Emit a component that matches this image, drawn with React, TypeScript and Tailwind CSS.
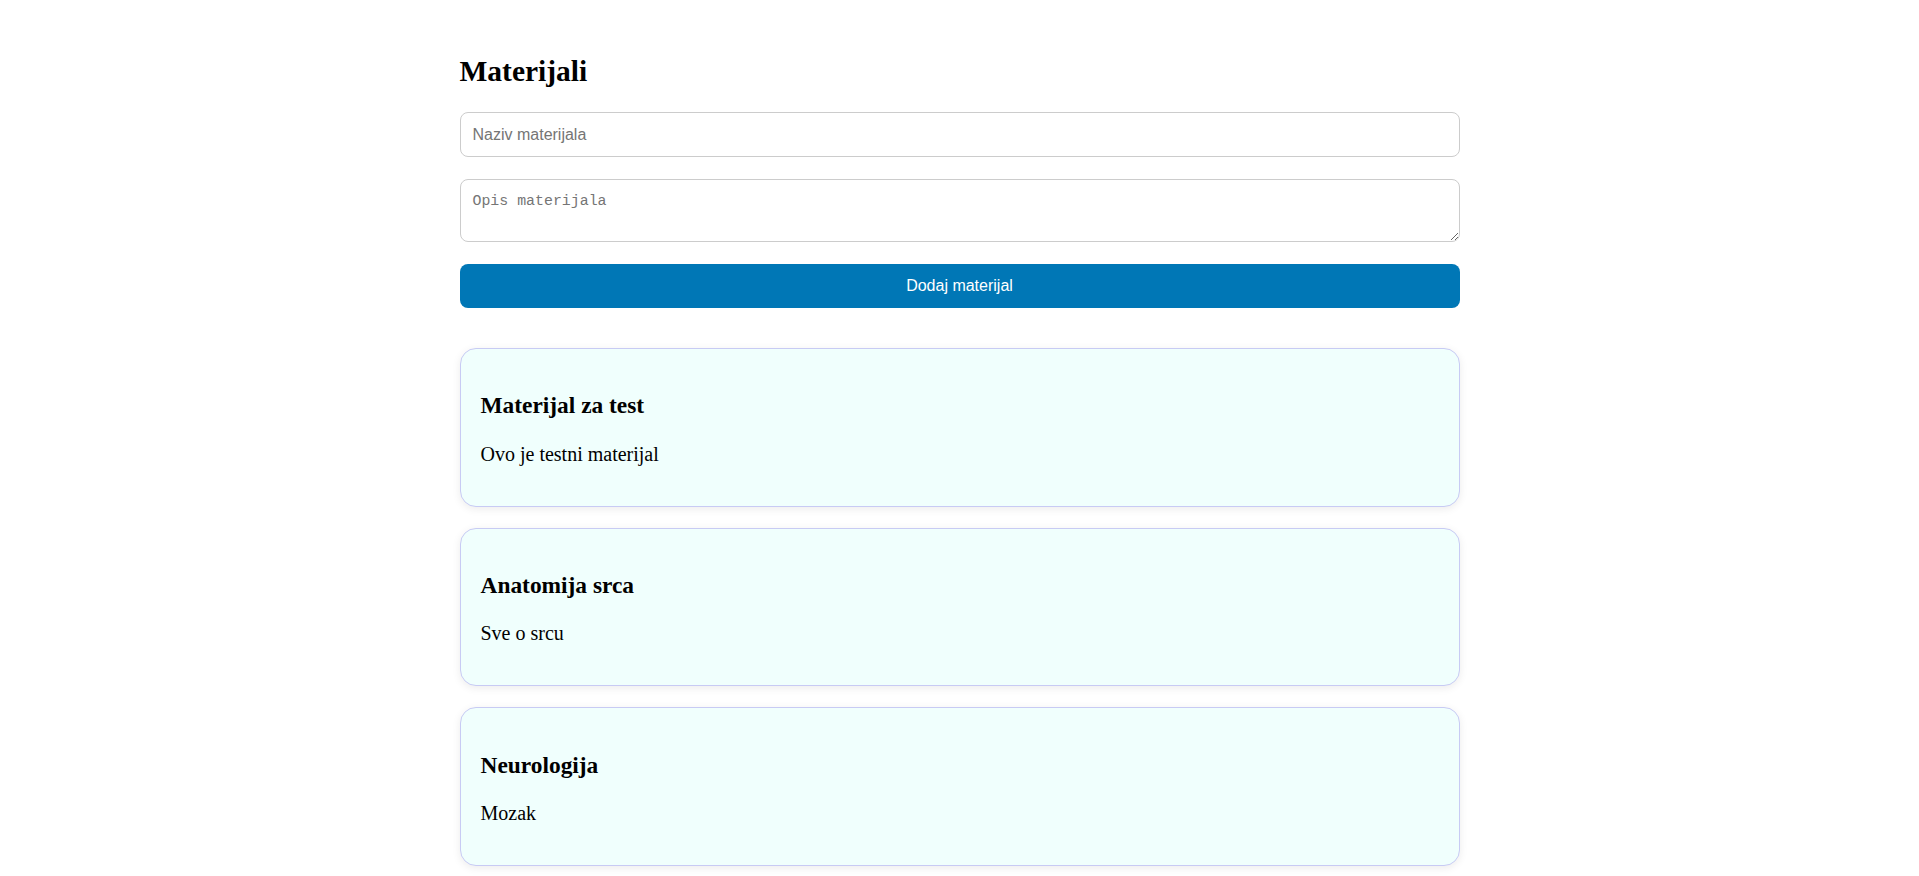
import { useState } from "react";

interface Material {
  naziv: string;
  opis: string;
}

const initialMaterials: Material[] = [
  { naziv: "Materijal za test", opis: "Ovo je testni materijal" },
  { naziv: "Anatomija srca", opis: "Sve o srcu" },
  { naziv: "Neurologija", opis: "Mozak" },
];

function MaterialCard({ material }: { material: Material }) {
  return (
    <div className="rounded-2xl border border-[#c8cbf4] bg-[#f0fffd] px-5 py-[20px] shadow-[0_2px_8px_rgba(0,0,0,0.08)] flow-root">
      <h3 className="my-[23.4px] text-[23.4px] font-bold leading-[1.15]">
        {material.naziv}
      </h3>
      <p className="my-[20px] text-[20px] leading-[1.15]">{material.opis}</p>
    </div>
  );
}

export default function App() {
  const [materials, setMaterials] = useState<Material[]>(initialMaterials);
  const [naziv, setNaziv] = useState("");
  const [opis, setOpis] = useState("");

  const dodaj = () => {
    if (!naziv.trim()) return;
    setMaterials([...materials, { naziv, opis }]);
    setNaziv("");
    setOpis("");
  };

  return (
    <div className="min-h-screen bg-white text-black font-['Liberation_Serif',serif]">
      <div className="mx-auto w-[1000px] pb-3">
        <h2 className="pt-[55px] pb-[23px] text-[29.5px] font-bold leading-[1.15]">
          Materijali
        </h2>

        {/* Form */}
        <div className="flex flex-col gap-[22px]">
          <input
            value={naziv}
            onChange={(e) => setNaziv(e.target.value)}
            placeholder="Naziv materijala"
            className="h-[45px] w-full rounded-lg border border-[#cccccc] px-3 pt-[2px] font-['Liberation_Sans',Arial,sans-serif] text-[16px] outline-none placeholder:text-[#757575]"
          />
          <textarea
            value={opis}
            onChange={(e) => setOpis(e.target.value)}
            placeholder="Opis materijala"
            className="block h-[63px] w-full resize rounded-lg border border-[#cccccc] px-3 pt-[13px] pb-[9px] font-['Liberation_Mono',monospace] text-[14.9px] leading-[1.2] outline-none placeholder:text-[#757575]"
          />
          <button
            onClick={dodaj}
            className="h-[44px] w-full rounded-lg bg-[#0077b6] font-['Liberation_Sans',Arial,sans-serif] text-[16px] text-white"
          >
            Dodaj materijal
          </button>
        </div>

        {/* List */}
        <div className="mt-10 flex flex-col gap-[21px]">
          {materials.map((m, i) => (
            <MaterialCard key={i} material={m} />
          ))}
        </div>
      </div>
    </div>
  );
}
